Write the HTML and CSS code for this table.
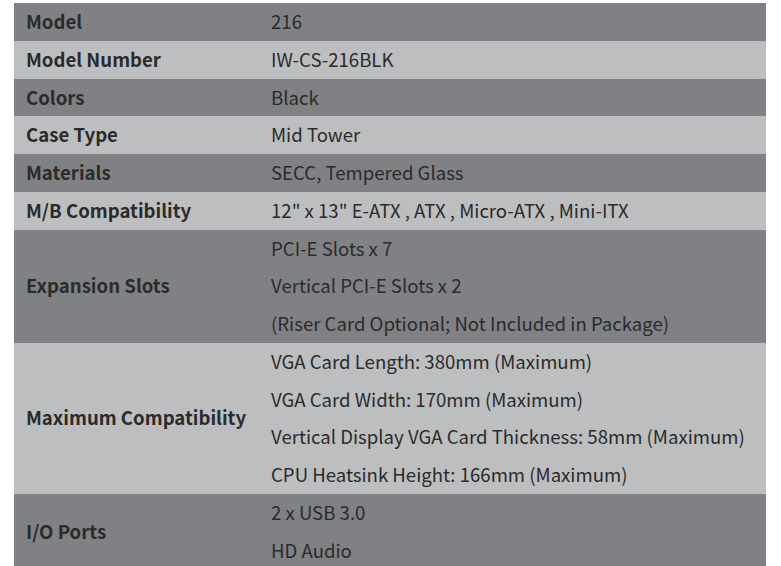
FILE: index.html
```html
<!DOCTYPE html>
<html>
<head>
<meta charset="utf-8">
<link rel="stylesheet" href="styles.css">
</head>
<body>
<table class="spec">
  <tr class="dark"><th>Model</th><td><div>216</div></td></tr>
  <tr class="light"><th>Model Number</th><td><div>IW-CS-216BLK</div></td></tr>
  <tr class="dark"><th>Colors</th><td><div>Black</div></td></tr>
  <tr class="light"><th>Case Type</th><td><div>Mid Tower</div></td></tr>
  <tr class="dark"><th>Materials</th><td><div>SECC, Tempered Glass</div></td></tr>
  <tr class="light"><th>M/B Compatibility</th><td><div>12" x 13" E-ATX , ATX , Micro-ATX , Mini-ITX</div></td></tr>
  <tr class="dark"><th>Expansion Slots</th><td><div>PCI-E Slots x 7</div><div>Vertical PCI-E Slots x 2</div><div>(Riser Card Optional; Not Included in Package)</div></td></tr>
  <tr class="light"><th>Maximum Compatibility</th><td><div>VGA Card Length: 380mm (Maximum)</div><div>VGA Card Width: 170mm (Maximum)</div><div>Vertical Display VGA Card Thickness: 58mm (Maximum)</div><div>CPU Heatsink Height: 166mm (Maximum)</div></td></tr>
  <tr class="dark"><th>I/O Ports</th><td><div>2 x USB 3.0</div><div>HD Audio</div></td></tr>
</table>
</body>
</html>
```
FILE: styles.css
```css
html, body {
  margin: 0;
  padding: 0;
  background: #ffffff;
}
body {
  padding: 3px 0 0 14px;
  font-family: "Noto Sans CJK SC", "Noto Sans", sans-serif;
  font-size: 18.6px;
  color: #2b2b2b;
}
.spec {
  width: 752px;
  border-collapse: collapse;
  border-spacing: 0;
}
.spec th, .spec td {
  padding: 0 12px;
  text-align: left;
  vertical-align: middle;
}
.spec th {
  width: 221px;
  font-weight: 700;
  line-height: 36px;
  padding-bottom: 1.75px;
}
.spec td {
  font-weight: 400;
}
.spec td div {
  height: 37.75px;
  line-height: 36px;
  white-space: nowrap;
}
.dark { background: #808184; }
.light { background: #bdbec0; }
```
